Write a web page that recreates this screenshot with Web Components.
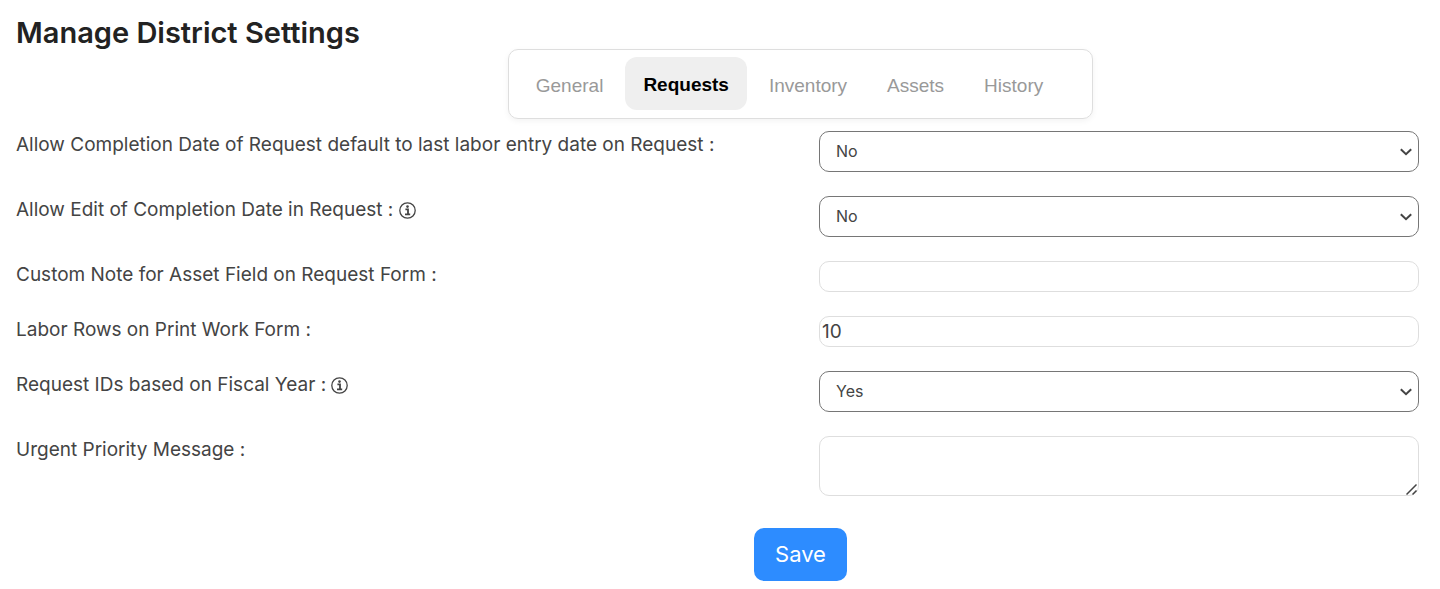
<!DOCTYPE html>
<html lang="en">
<head>
<meta charset="utf-8">
<meta name="viewport" content="width=device-width, initial-scale=1">
<title>Manage District Settings</title>
<style>
  body { margin: 0; background: #fff; color: #444; font-family: Inter, "Liberation Sans", sans-serif; }
</style>
</head>
<body>
<settings-page heading="Manage District Settings">
  <tab-bar slot="tabs">
    <tab-item>General</tab-item>
    <tab-item active>Requests</tab-item>
    <tab-item>Inventory</tab-item>
    <tab-item>Assets</tab-item>
    <tab-item>History</tab-item>
  </tab-bar>
  <setting-row kind="select" value="No">Allow Completion Date of Request default to last labor entry date on Request :</setting-row>
  <setting-row kind="select" value="No" info>Allow Edit of Completion Date in Request :</setting-row>
  <setting-row kind="text">Custom Note for Asset Field on Request Form :</setting-row>
  <setting-row kind="text" value="10">Labor Rows on Print Work Form :</setting-row>
  <setting-row kind="select" value="Yes" info>Request IDs based on Fiscal Year :</setting-row>
  <setting-row kind="textarea">Urgent Priority Message :</setting-row>
  <save-button slot="actions">Save</save-button>
</settings-page>

<script>
class BaseElement extends HTMLElement {
  connectedCallback() {
    if (this.shadowRoot) return;
    this.attachShadow({ mode: 'open' }).innerHTML = this.render();
  }
}

class SettingsPage extends BaseElement {
  render() {
    return `
      <style>
        :host { display: block; padding: 16px 21px 8px 16px; --center-shift: 166px; }
        h1 { margin: 0; font-size: 29px; line-height: 33px; font-weight: 600; color: #222; }
        nav, footer { display: flex; justify-content: center; padding-left: var(--center-shift); }
        form { display: grid; gap: 24px; margin-top: 12px; }
        footer { padding-top: 8px; }
      </style>
      <h1>${this.getAttribute('heading')}</h1>
      <nav><slot name="tabs"></slot></nav>
      <form><slot></slot><footer><slot name="actions"></slot></footer></form>`;
  }
}

class TabBar extends BaseElement {
  render() {
    return `
      <style>
        :host { display: flex; align-items: center; gap: 4px; box-sizing: border-box;
          padding: 7px 31px 8px 9px; border: 1px solid #dedede; border-radius: 10px;
          box-shadow: 0 2px 6px rgba(0, 0, 0, .05); }
      </style>
      <slot></slot>`;
  }
}

class TabItem extends BaseElement {
  render() {
    return `
      <style>
        :host { display: block; }
        button { display: block; height: 53px; padding: 4px 18px 0; border: 0; border-radius: 12px;
          background: none; color: #999; font: 19px/24px "Liberation Sans", Arial, sans-serif; }
        :host([active]) button { padding-top: 2px; background: #efefef; color: #000; font-weight: 700; }
      </style>
      <button type="button"><slot></slot></button>`;
  }
}

class InfoIcon extends BaseElement {
  render() {
    return `
      <style>
        :host { display: inline-block; width: 17px; height: 17px; vertical-align: -3px; }
        svg { display: block; }
      </style>
      <svg width="17" height="17" viewBox="0 0 17 17" fill="none" stroke="currentColor" aria-hidden="true">
        <circle cx="8.5" cy="8.5" r="7.7" stroke-width="1.3"/>
        <path d="M6.4 7.3H9v5M6 12.3h5.2" stroke-width="1.8"/>
        <circle cx="8.5" cy="4.6" r="1.3" fill="currentColor" stroke="none"/>
      </svg>`;
  }
}

class SettingRow extends BaseElement {
  control() {
    const value = this.getAttribute('value') || '';
    switch (this.getAttribute('kind')) {
      case 'select':
        return `<select id="field">${['No', 'Yes'].map(o =>
          `<option${o === value ? ' selected' : ''}>${o}</option>`).join('')}</select>`;
      case 'textarea':
        return '<textarea id="field"></textarea>';
      default:
        return `<input id="field" type="text" value="${value}">`;
    }
  }
  render() {
    return `
      <style>
        :host { display: grid; grid-template-columns: 4fr 3fr; column-gap: 3px; align-items: start; }
        label { padding-top: 1px; font-size: 19px; line-height: 26px; }
        select, input, textarea { display: block; box-sizing: border-box; width: 100%; margin: 0;
          border: 1px solid #dedede; border-radius: 10px; background: #fff; color: #444;
          font-family: inherit; font-size: 19px; }
        select { appearance: none; height: 41px; padding: 0 16px 2px; border-color: #767676; font-size: 16px;
          background: #fff url("data:image/svg+xml,%3Csvg xmlns='http://www.w3.org/2000/svg' width='12' height='8' fill='none' stroke='%23444' stroke-width='2'%3E%3Cpath d='M.8 1.2 6 6.2l5.2-5'/%3E%3C/svg%3E") no-repeat right 6px center; }
        input { height: 31px; padding: 0 2px; }
        textarea { height: 60px; padding: 2px; resize: vertical; }
        textarea::-webkit-resizer {
          background: url("data:image/svg+xml,%3Csvg xmlns='http://www.w3.org/2000/svg' width='12' height='12' fill='none' stroke='%23444' stroke-width='1.5'%3E%3Cpath d='M.5 11.5 10.5 1.5M6.5 11.5l4-4'/%3E%3C/svg%3E") no-repeat right bottom; }
      </style>
      <label for="field"><slot></slot>${this.hasAttribute('info') ? ' <info-icon></info-icon>' : ''}</label>
      ${this.control()}`;
  }
}

class SaveButton extends BaseElement {
  render() {
    return `
      <style>
        :host { display: block; }
        button { display: block; height: 53px; padding: 0 21px 2px; border: 0; border-radius: 10px;
          background: #2d8cff; color: #fff; font-family: inherit; font-size: 22px; line-height: 28px; }
      </style>
      <button type="submit"><slot></slot></button>`;
  }
}

customElements.define('settings-page', SettingsPage);
customElements.define('tab-bar', TabBar);
customElements.define('tab-item', TabItem);
customElements.define('info-icon', InfoIcon);
customElements.define('setting-row', SettingRow);
customElements.define('save-button', SaveButton);
</script>
</body>
</html>
